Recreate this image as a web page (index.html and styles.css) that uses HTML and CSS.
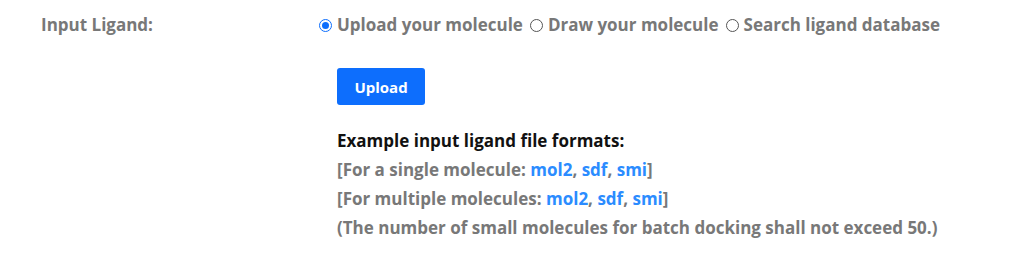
FILE: index.html
```html
<!DOCTYPE html>
<html>
<head>
<meta charset="utf-8">
<link rel="stylesheet" href="styles.css">
</head>
<body>
<div class="row">
  <div class="label">Input Ligand:</div>
  <div class="content">
    <div class="radios">
      <label class="opt"><span class="radio checked"></span>Upload your molecule</label>
      <label class="opt"><span class="radio"></span>Draw your molecule</label>
      <label class="opt"><span class="radio"></span>Search ligand database</label>
    </div>
    <div class="panel">
      <button class="btn">Upload</button>
      <div class="info">
        <div class="title">Example input ligand file formats:</div>
        <div class="line">[For a single molecule: <a>mol2</a>, <a>sdf</a>, <a>smi</a>]</div>
        <div class="line">[For multiple molecules: <a>mol2</a>, <a>sdf</a>, <a>smi</a>]</div>
        <div class="line">(The number of small molecules for batch docking shall not exceed 50.)</div>
      </div>
    </div>
  </div>
</div>
</body>
</html>
```
FILE: styles.css
```css
html, body { margin: 0; padding: 0; background: #fff; }
body {
  font-family: "Open Sans", "Noto Sans", sans-serif;
  font-weight: 700;
  font-size: 17px;
  color: #787878;
}
.row { display: flex; padding: 12px 0 0 41px; }
.label { width: 278px; line-height: 26px; }
.content { display: flex; flex-direction: column; }
.radios { display: flex; gap: 7px; line-height: 26px; }
.opt { display: flex; align-items: center; gap: 5px; }
.radio {
  width: 11px; height: 11px; border: 1px solid #555; border-radius: 50%;
  box-sizing: content-box; display: inline-block; position: relative;
}
.radio.checked { border-color: #0d6efd; }
.radio.checked::after {
  content: ""; position: absolute; left: 2px; top: 2px; width: 7px; height: 7px;
  border-radius: 50%; background: #0d6efd;
}
.panel { padding: 30px 0 0 18px; }
.btn {
  background: #0d6efd; color: #fff; border: none; border-radius: 3px;
  width: 88px; height: 37px; font-family: inherit; font-weight: 700; font-size: 15px;
  padding: 0; display: block;
}
.info { margin-top: 21px; }
.title { color: #111; line-height: 29px; }
.line { line-height: 29px; }
.line a { color: #2b8cff; }
```
